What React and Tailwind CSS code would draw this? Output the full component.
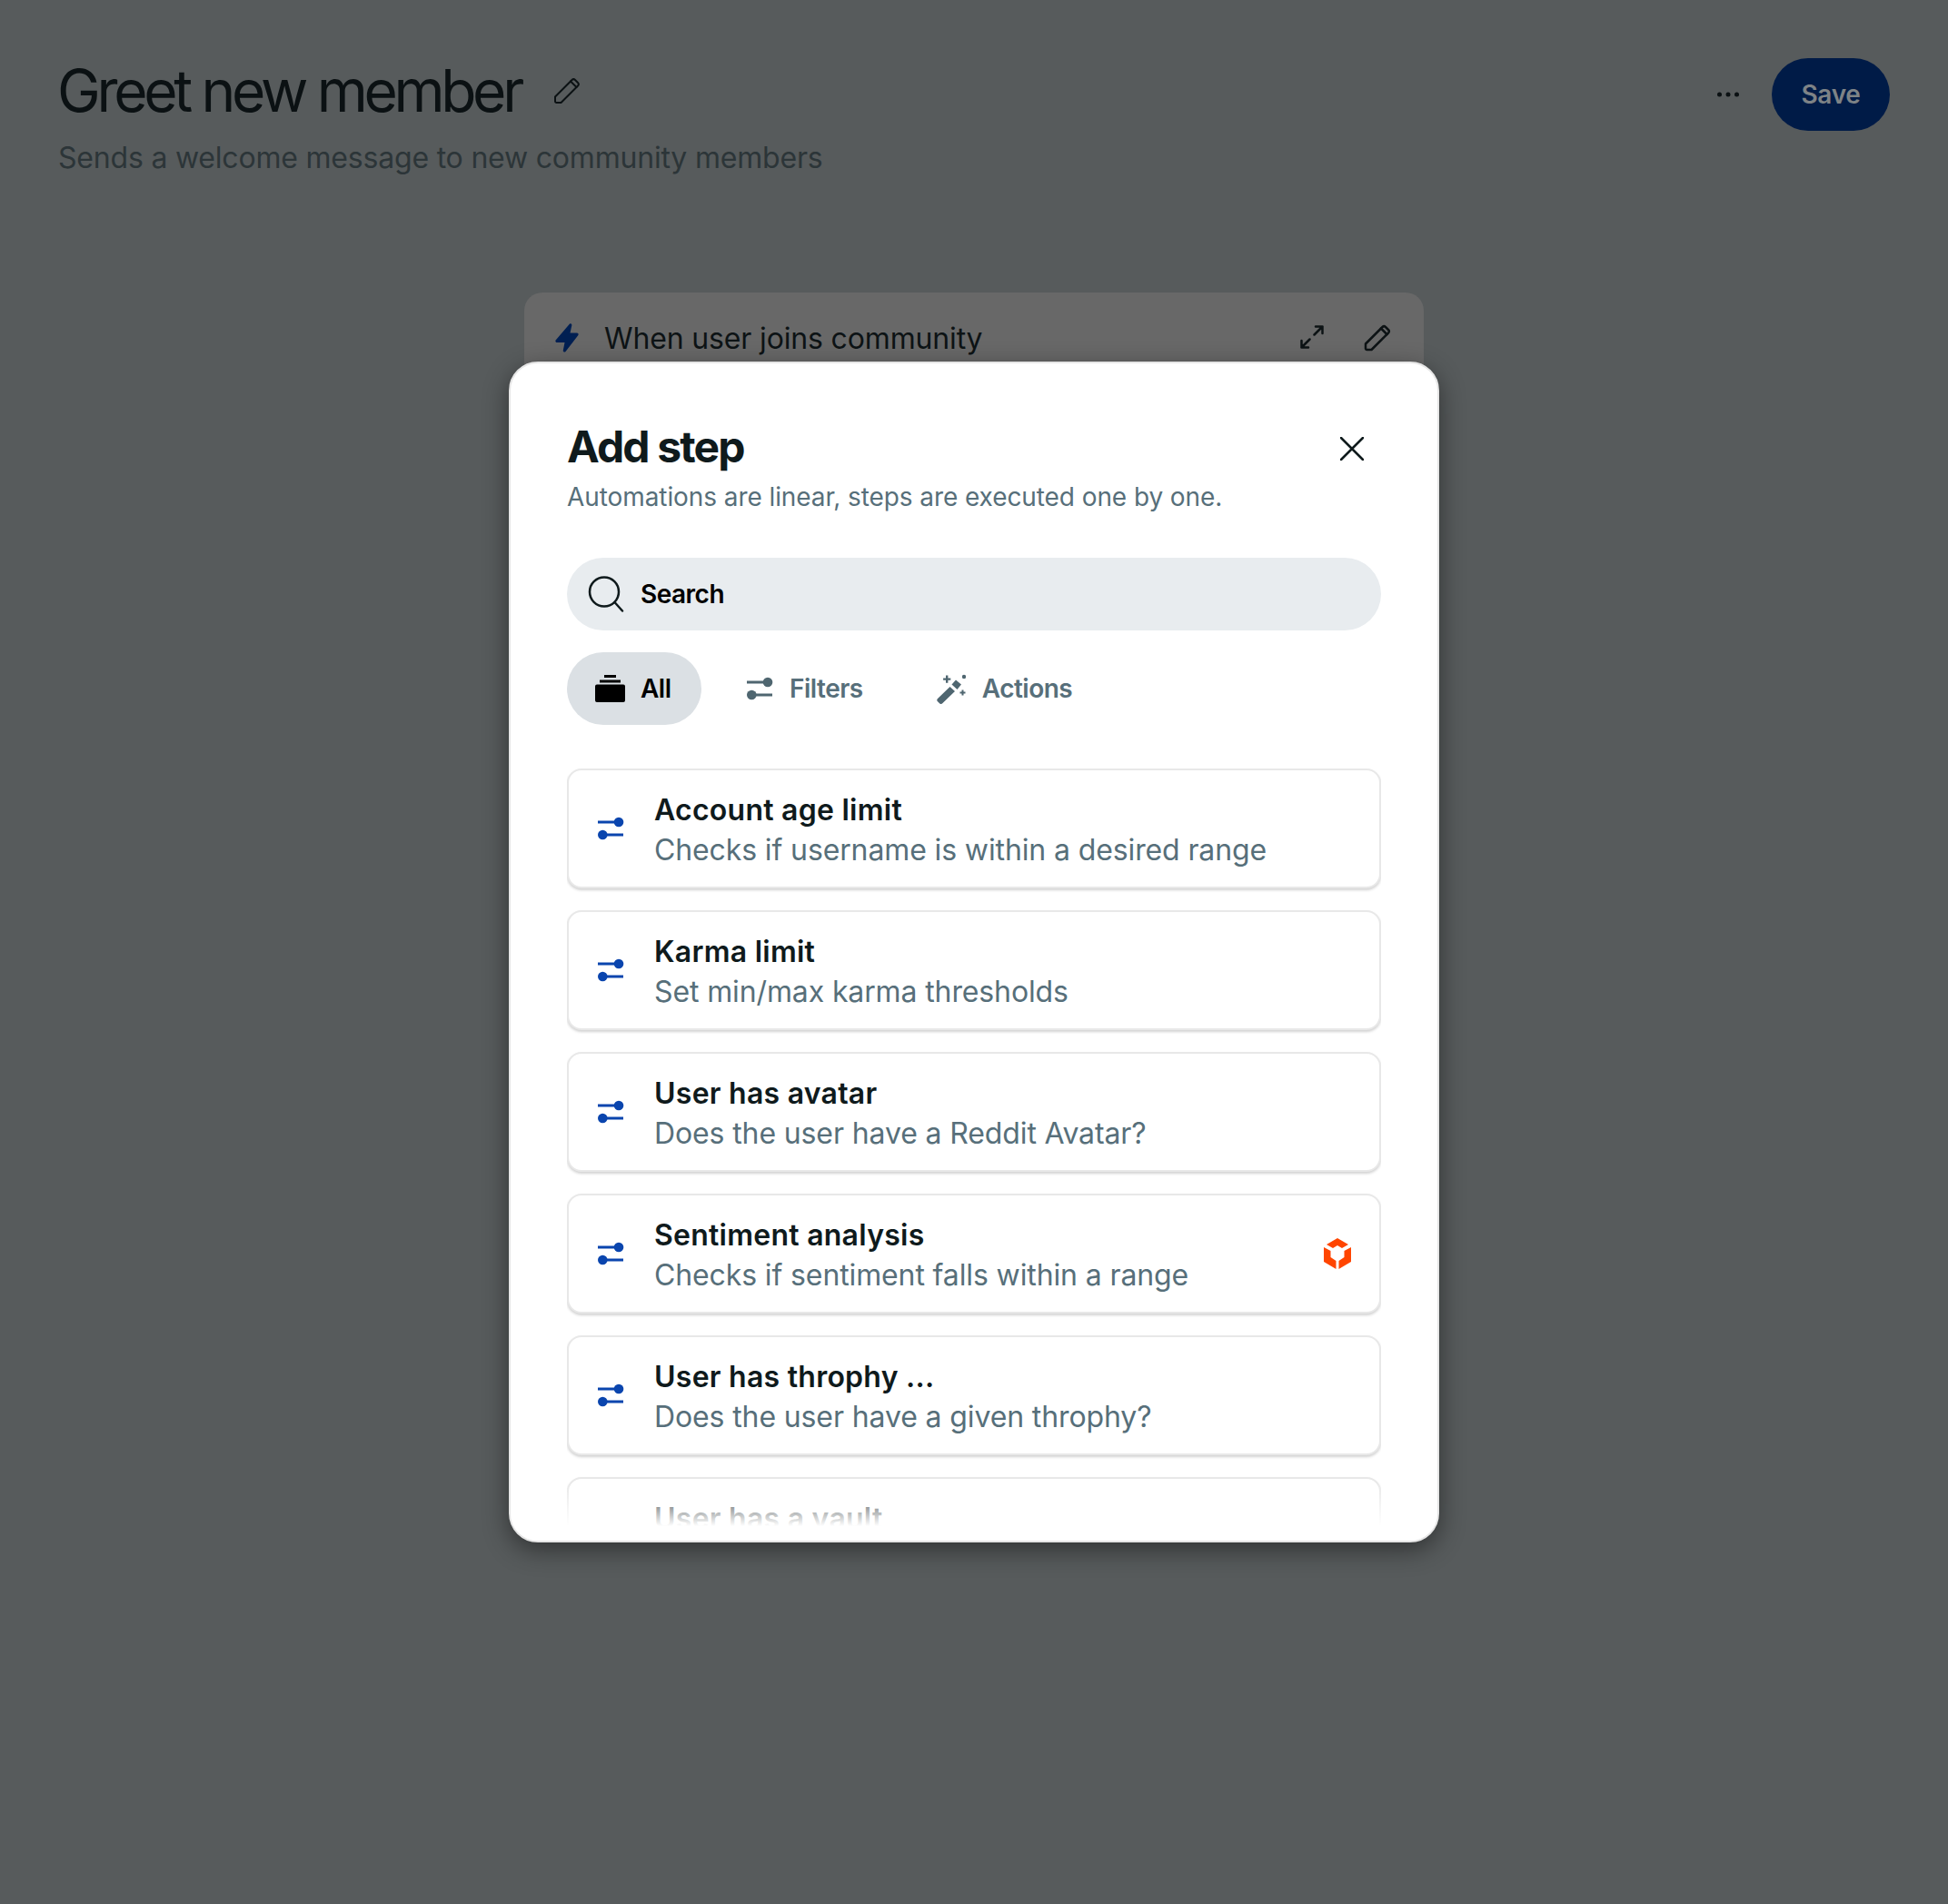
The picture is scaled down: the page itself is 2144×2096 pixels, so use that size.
import React from "react";

const FilterIcon = ({ className = "" }) => (
  <svg viewBox="0 0 32 32" className={className} fill="currentColor">
    <rect x="2" y="7.5" width="24" height="3" />
    <circle cx="25" cy="9" r="5.3" />
    <rect x="6" y="21.5" width="24" height="3" />
    <circle cx="7.3" cy="23" r="5.3" />
  </svg>
);

const Pencil = ({ className = "", sw = 2.5 }) => (
  <svg viewBox="0 0 30 30" className={className} fill="none" stroke="currentColor" strokeWidth={sw} strokeLinejoin="round" strokeLinecap="round">
    <path d="M2 21.5 20.5 3a2.5 2.5 0 0 1 3.5 0l3 3a2.5 2.5 0 0 1 0 3.5L8.500 28H3.500A1.500 1.500 0 0 1 2 26.500Z" />
    <path d="M19 4.500 25.500 11" />
  </svg>
);

const Item = ({ title, sub, badge }) => (
  <div className="relative flex h-[132px] shrink-0 items-center rounded-[16px] border-2 border-[#e8e8e8] bg-white pl-[30px] shadow-[0_2px_3px_rgba(0,0,0,0.18)]">
    <FilterIcon className="h-8 w-8 shrink-0 text-[#0a45ae]" />
    <div className="ml-[32px] flex flex-col pt-[4px]">
      <div className="text-[32px] leading-[44px] font-semibold tracking-[0.25px] text-[#0f1a1c]">{title}</div>
      <div className="text-[32px] leading-[44px] tracking-[-0.12px] text-[#576f7a]">{sub}</div>
    </div>
    {badge && (
      <svg viewBox="0 0 30 34" className="absolute top-[47px] right-[31px] h-[34px] w-[30px]" fill="#ff4500">
        <path d="M15 0 27 7 20 11 15 8 10 11 3 7Z" />
        <path d="M0 10 7.500 14 7.500 21 13.500 25 13.500 34 0 26Z" />
        <path d="M30 10 22.500 14 22.500 21 16.500 25 16.500 34 30 26Z" />
      </svg>
    )}
  </div>
);

export default function App() {
  return (
    <div className="relative h-[2096px] w-[2144px] overflow-hidden bg-[#575b5c] font-['Inter',sans-serif]">
      <header className="flex items-start justify-between pt-[64px] pr-[64px] pl-[64px]">
        <div className="flex flex-col">
          <div className="flex h-[72px] items-center">
            <h1 className="-ml-[1px] text-[64px] leading-[72px] font-normal tracking-[-4.3px] text-[#0b1113]">Greet new member</h1>
            <Pencil className="ml-[36px] h-[30px] w-[30px] text-[#0b1113]" sw={2} />
          </div>
          <p className="mt-[16px] text-[32px] leading-[44px] tracking-[-0.2px] text-[#2c3538]">Sends a welcome message to new community members</p>
        </div>
        <div className="flex items-center">
          <svg viewBox="0 0 24 6" className="h-[6px] w-[24px] text-[#0b1113]" fill="currentColor">
            <circle cx="2.500" cy="3" r="2.500" />
            <circle cx="12" cy="3" r="2.500" />
            <circle cx="21.500" cy="3" r="2.500" />
          </svg>
          <button className="ml-[36px] flex h-[80px] w-[130px] items-center justify-center rounded-full bg-[#001b47] text-[28px] font-semibold tracking-[-0.3px] text-[#7e8386]">Save</button>
        </div>
      </header>

      <div className="mx-auto mt-[126px] flex h-[120px] w-[990px] items-start rounded-[20px] bg-[#686868] pt-[29px] pr-[36px] pl-[34px]">
        <svg viewBox="0 0 26 32" className="mt-[5px] h-[32px] w-[26px] shrink-0 text-[#001f52]" fill="currentColor">
          <path d="M16 0.500c1.200-0.700 2.600 0.300 2.300 1.700L16.500 10.500h7.500c1.400 0 2.200 1.600 1.200 2.700L11.500 31c-1.100 1.300-3 0.300-2.700-1.300L10.500 21H2c-1.400 0-2.200-1.600-1.200-2.700Z" />
        </svg>
        <span className="ml-[28px] text-[32px] leading-[44px] tracking-[-0.15px] text-[#0d1315]">When user joins community</span>
        <svg viewBox="0 0 26 26" className="mt-[7px] ml-auto h-[26px] w-[26px] translate-x-[2px] text-[#0d1315]" fill="none" stroke="currentColor" strokeWidth="2.500" strokeLinecap="round" strokeLinejoin="round">
          <path d="M17 1.500h7.500V9M24.500 1.500 15.500 10.500M9 24.500H1.500V17M1.500 24.500 10.500 15.500" />
        </svg>
        <Pencil className="mt-[6px] ml-[46px] h-[30px] w-[30px] text-[#0d1315]" />
      </div>

      <div className="absolute top-[398px] left-[560px] flex h-[1300px] w-[1024px] flex-col overflow-hidden rounded-[32px] border-2 border-[#e6e6e6] bg-white px-[62px] pt-[62px] shadow-[0_8px_28px_rgba(0,0,0,0.45)]">
        <div className="flex items-start justify-between">
          <h2 className="text-[48px] leading-[60px] font-bold tracking-[-1.85px] text-[#0f1a1c]">Add step</h2>
          <svg viewBox="0 0 26 26" className="mt-[19px] mr-[19px] h-[26px] w-[26px] text-[#0f1a1c]" fill="none" stroke="currentColor" strokeWidth="2.500" strokeLinecap="round">
            <path d="M1 1 25 25M25 1 1 25" />
          </svg>
        </div>
        <p className="mt-[5px] text-[28px] leading-[40px] tracking-[-0.08px] text-[#576f7a]">Automations are linear, steps are executed one by one.</p>

        <div className="mt-[47px] flex h-[80px] shrink-0 items-center rounded-full bg-[#e8ecef] pl-[23px]">
          <svg viewBox="0 0 40 40" className="h-[40px] w-[40px] text-[#0f1a1c]" fill="none" stroke="currentColor" strokeWidth="2.500" strokeLinecap="round">
            <circle cx="18" cy="17.500" r="16" />
            <path d="M29.500 29 38 38.500" />
          </svg>
          <span className="ml-[18px] text-[28px] font-semibold tracking-[-0.5px] text-black">Search</span>
        </div>

        <div className="mt-[24px] flex h-[80px] shrink-0 items-center text-[28px] font-semibold tracking-[-0.5px]">
          <div className="flex h-[80px] w-[148px] items-center rounded-full bg-[#dbe0e4] pl-[31px] text-black">
            <svg viewBox="0 0 33 30" className="h-[30px] w-[33px]" fill="currentColor">
              <rect x="10" y="0" width="13" height="3" />
              <rect x="5" y="5.500" width="23" height="3" />
              <path d="M2 10.500H31a2 2 0 0 1 2 2V28a2 2 0 0 1-2 2H2a2 2 0 0 1-2-2V12.500a2 2 0 0 1 2-2Z" />
            </svg>
            <span className="ml-[17px]">All</span>
          </div>
          <div className="ml-[48px] flex items-center text-[#576f7a]">
            <FilterIcon className="h-[32px] w-[32px] text-[#4f6670]" />
            <span className="ml-[17px]">Filters</span>
          </div>
          <div className="ml-[81px] flex items-center text-[#576f7a]">
            <svg viewBox="0 0 33 33" className="h-[33px] w-[33px] text-[#4f6670]" fill="currentColor">
              <path d="M21 6.500 27 11.500 22.500 17 16.500 11.500Z" />
              <path d="M14.500 14 20 19 6 32.500c-0.800 0.700-2 0.700-2.700 0L0.800 30c-0.700-0.800-0.700-1.900 0-2.700Z" />
              <path d="M10 1.500h2.400v2.900h2.900v2.400h-2.900v2.900H10V6.800H7.100V4.400H10Z" />
              <circle cx="30" cy="3" r="2.200" />
              <path d="M27.500 17.500h2v2h2v2h-2v2h-2v-2h-2v-2h2Z" />
            </svg>
            <span className="ml-[17px]">Actions</span>
          </div>
        </div>

        <div className="relative mt-[48px] flex min-h-0 flex-1 flex-col gap-[24px] overflow-hidden">
          <Item title="Account age limit" sub="Checks if username is within a desired range" />
          <Item title="Karma limit" sub="Set min/max karma thresholds" />
          <Item title="User has avatar" sub="Does the user have a Reddit Avatar?" />
          <Item title="Sentiment analysis" sub="Checks if sentiment falls within a range" badge />
          <Item title="User has throphy ..." sub="Does the user have a given throphy?" />
          <Item title="User has a vault" sub="Does the user have a vault?" />
        </div>
        <div className="pointer-events-none absolute right-0 bottom-0 left-0 h-[64px] bg-gradient-to-t from-white from-25% to-transparent" />
      </div>
    </div>
  );
}
